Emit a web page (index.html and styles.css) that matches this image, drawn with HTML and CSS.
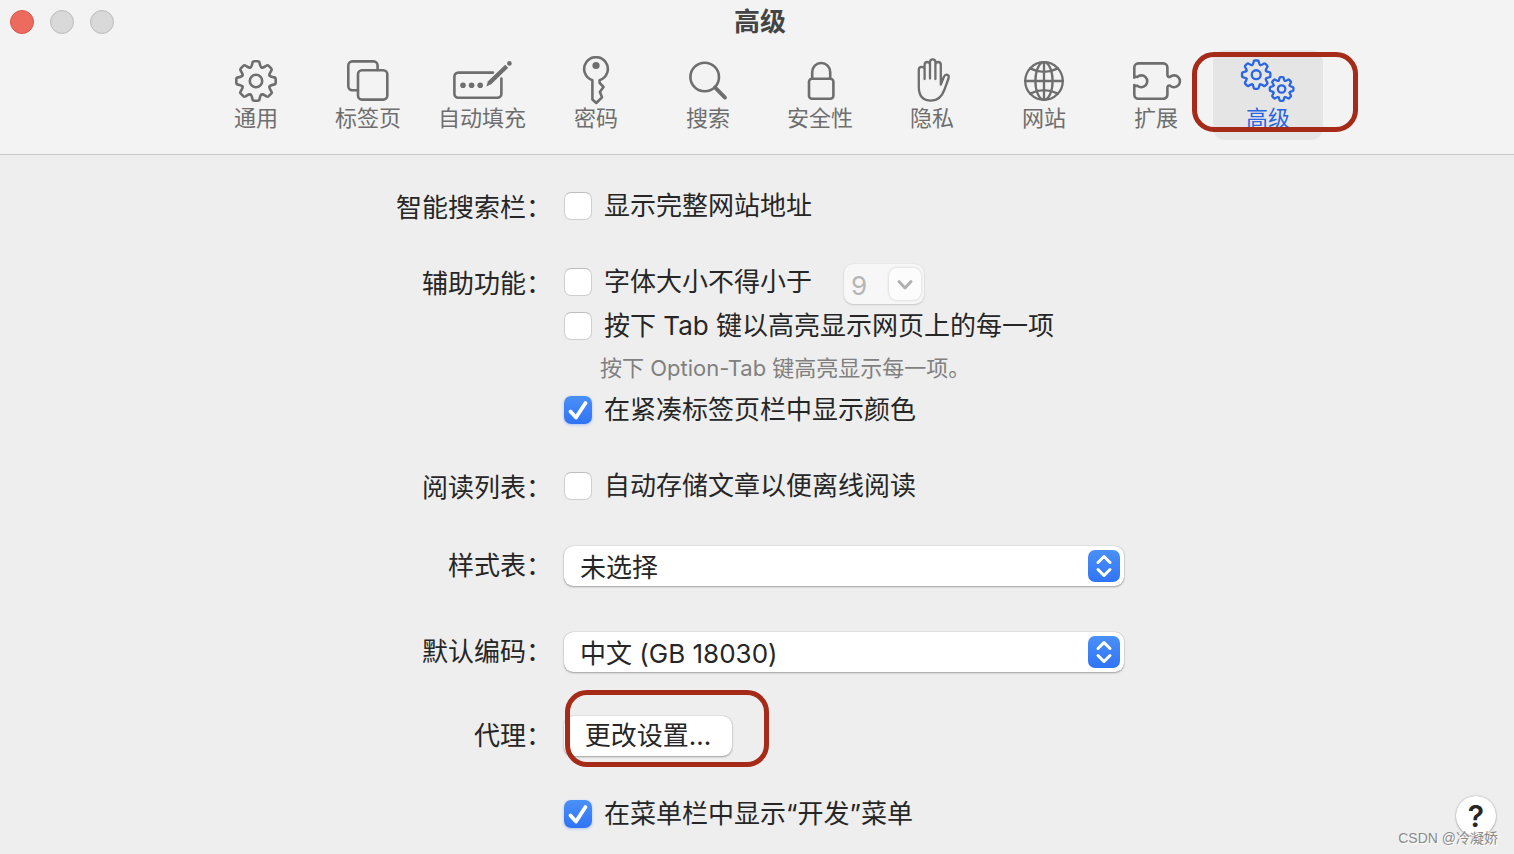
FILE: index.html
```
<!DOCTYPE html>
<html lang="zh-CN">
<head>
  <meta charset="UTF-8">
  <meta name="viewport" content="width=device-width, initial-scale=1.0">
  <title>高级</title>
  <link rel="stylesheet" href="styles.css">
</head>
<body>
  <!-- shared gear shape: one tooth, rotated eight times -->
  <svg class="defs" aria-hidden="true">
    <defs>
      <path id="tooth" vector-effect="non-scaling-stroke" d="M-5.6 -13.5C-4.5 -14 -4.2 -14.9 -3.9 -16.4L-3.6 -18Q-3.3 -19.7 -1.8 -19.7H1.8Q3.3 -19.7 3.6 -18L3.9 -16.4C4.2 -14.9 4.5 -14 5.6 -13.5"/>
      <g id="gear">
        <use href="#tooth"/>
        <use href="#tooth" transform="rotate(45)"/>
        <use href="#tooth" transform="rotate(90)"/>
        <use href="#tooth" transform="rotate(135)"/>
        <use href="#tooth" transform="rotate(180)"/>
        <use href="#tooth" transform="rotate(225)"/>
        <use href="#tooth" transform="rotate(270)"/>
        <use href="#tooth" transform="rotate(315)"/>
        <circle r="6.2" vector-effect="non-scaling-stroke"/>
      </g>
    </defs>
  </svg>

  <header>
    <div class="titlebar">
      <div class="lights">
        <button class="light close" aria-label="关闭"></button>
        <button class="light" aria-label="最小化"></button>
        <button class="light" aria-label="缩放"></button>
      </div>
      <h1>高级</h1>
    </div>

    <nav class="toolbar">
      <button class="tab">
        <svg viewBox="-30 -25 60 50"><use href="#gear"/></svg>
        <span>通用</span>
      </button>
      <button class="tab">
        <svg viewBox="-30 -25 60 50">
          <rect x="-10" y="-10.7" width="29.3" height="29.3" rx="4"/>
          <path d="M9.6 -11V-15.6a4 4 0 0 0 -4 -4H-15.7a4 4 0 0 0 -4 4V5.3a4 4 0 0 0 4 4H-10.5"/>
        </svg>
        <span>标签页</span>
      </button>
      <button class="tab autofill">
        <svg viewBox="-30 -25 60 50">
          <path d="M11 -8.4H-23.6a4 4 0 0 0 -4 4V12.7a4 4 0 0 0 4 4H15.4a4 4 0 0 0 4 -4V-2.5"/>
          <g class="solid">
            <circle cx="-19" cy="4.3" r="2.8"/>
            <circle cx="-10.4" cy="4.3" r="2.8"/>
            <circle cx="-1.8" cy="4.3" r="2.8"/>
            <path d="M4.3 5.4L6 .3L23.2 -16.2L26.2 -13.2L9.2 3.3z"/>
            <circle cx="27.4" cy="-17.6" r="2.3"/>
          </g>
        </svg>
        <span>自动填充</span>
      </button>
      <button class="tab">
        <svg viewBox="-30 -25 60 50">
          <path d="M-3.6 -.8A11.8 11.8 0 1 1 3.6 -.8V1.8L7.5 6L3.9 11L6 16.3L.3 22L-3.6 18.5z"/>
          <circle class="solid" cx="0" cy="-15.5" r="3.6"/>
        </svg>
        <span>密码</span>
      </button>
      <button class="tab">
        <svg viewBox="-30 -25 60 50">
          <circle cx="-3.3" cy="-4" r="14.3"/>
          <path class="thick" d="M7 6.4L17 16.6"/>
        </svg>
        <span>搜索</span>
      </button>
      <button class="tab">
        <svg viewBox="-30 -25 60 50">
          <rect x="-11" y="-2.2" width="24.4" height="19.9" rx="3"/>
          <path d="M-7.8 -2.5V-9a9 9 0 0 1 18 0V-2.5"/>
        </svg>
        <span>安全性</span>
      </button>
      <button class="tab">
        <svg viewBox="-30 -25 60 50">
          <path class="thin" d="M-13.2 6V-11.2a2.9 2.9 0 0 1 5.8 0V-2V-16.3a2.7 2.7 0 0 1 5.4 0V-2.5V-19a2.7 2.7 0 0 1 5.4 0V-2V-16.3a2.7 2.7 0 0 1 5.4 0V3.7L11.8 -4Q13.2 -7 15.4 -6.2Q17.4 -5.2 16.5 -2.5L12.5 8.5Q8.5 19.6 -.8 19.6Q-13.2 19.6 -13.2 6z"/>
        </svg>
        <span>隐私</span>
      </button>
      <button class="tab">
        <svg viewBox="-30 -25 60 50">
          <g class="thin">
            <circle r="18.8"/>
            <ellipse rx="8.6" ry="18.8"/>
            <path d="M0 -18.8V18.8M-18.8 0H18.8M-14 -12.6Q0 -5.6 14 -12.6M-14 12.6Q0 5.6 14 12.6"/>
          </g>
        </svg>
        <span>网站</span>
      </button>
      <button class="tab">
        <svg viewBox="-30 -25 60 50">
          <path d="M-21.7 -3.4V-13.6a4 4 0 0 1 4 -4H7.4a4 4 0 0 1 4 4V-6.5Q11.4 -3.7 14 -4A5.9 5.9 0 1 1 14 4.6Q11.4 4.3 11.4 7V13.7a4 4 0 0 1 -4 4H-17.7a4 4 0 0 1 -4 -4V4Q-20 5.4 -18.7 4.6A5.9 5.9 0 1 0 -18.7 -4Q-20 -4.8 -21.7 -3.4z"/>
        </svg>
        <span>扩展</span>
      </button>
      <button class="tab active" aria-current="page">
        <svg viewBox="-30 -25 60 50">
          <use href="#gear" transform="translate(-11.8 -6.3) scale(.72)"/>
          <use href="#gear" transform="translate(13.6 8) scale(.6)"/>
        </svg>
        <span>高级</span>
        <i class="ring ring-tab"></i>
      </button>
    </nav>
  </header>

  <main class="settings">
    <div class="name">智能搜索栏：</div>
    <div class="group">
      <label class="row"><input type="checkbox">显示完整网站地址</label>
    </div>

    <div class="name">辅助功能：</div>
    <div class="group">
      <div class="row">
        <label class="row"><input type="checkbox">字体大小不得小于</label>
        <div class="size-box">
          <select class="size" aria-label="最小字体大小" disabled><option>9</option></select>
          <svg class="size-arrow" viewBox="0 0 32 32"><path d="M10 13.5L16 20L22 13.5"/></svg>
        </div>
      </div>
      <label class="row"><input type="checkbox">按下 Tab 键以高亮显示网页上的每一项</label>
      <p class="hint">按下 Option-Tab 键高亮显示每一项。</p>
      <label class="row"><input type="checkbox" checked>在紧凑标签页栏中显示颜色</label>
    </div>

    <div class="name">阅读列表：</div>
    <div class="group">
      <label class="row"><input type="checkbox">自动存储文章以便离线阅读</label>
    </div>

    <label class="name pick" for="stylesheet">样式表：</label>
    <div class="group pick">
      <div class="row popup">
        <select id="stylesheet"><option>未选择</option></select>
        <svg class="popup-arrow" viewBox="0 0 32 32"><path d="M10 12.5L16 6.5L22 12.5M10 19.5L16 25.5L22 19.5"/></svg>
      </div>
    </div>

    <label class="name pick" for="encoding">默认编码：</label>
    <div class="group pick">
      <div class="row popup">
        <select id="encoding"><option>中文 (GB 18030)</option></select>
        <svg class="popup-arrow" viewBox="0 0 32 32"><path d="M10 12.5L16 6.5L22 12.5M10 19.5L16 25.5L22 19.5"/></svg>
      </div>
    </div>

    <div class="name proxy">代理：</div>
    <div class="group proxy">
      <div class="row">
        <button class="btn">更改设置…</button>
        <i class="ring ring-btn"></i>
      </div>
    </div>

    <div class="group develop">
      <label class="row"><input type="checkbox" checked>在菜单栏中显示“开发”菜单</label>
    </div>
  </main>

  <button class="help" aria-label="帮助">?</button>
  <div class="watermark">CSDN @冷凝娇</div>
</body>
</html>
```
FILE: styles.css
```
* { box-sizing: border-box; }
body { margin: 0; min-height: 100vh; position: relative; background: #eeeeee; color: #262626;
  font-family: Inter, "Noto Sans CJK SC", sans-serif; font-size: 26px; line-height: 48px; }
button, select, input { font: inherit; color: inherit; margin: 0; }
.defs { display: block; width: 0; height: 0; }

/* window header */
header { background: #f3f3f3; border-bottom: 1px solid #c8c8c8; padding-bottom: 14px; }
.titlebar { display: grid; grid-template-columns: 1fr auto 1fr; align-items: center;
  height: 44px; margin-bottom: 6px; padding: 0 4px 0 10px; }
.lights { display: flex; gap: 16px; }
.light { width: 24px; height: 24px; padding: 0; border: 1px solid #bcbcbc; border-radius: 50%;
  background: #d9d9d9; }
.light.close { background: #ed6a5e; border-color: #d9574b; }
h1 { margin: 0; font-size: 26px; line-height: 40px; font-weight: bold; color: #454545; }

.toolbar { display: flex; justify-content: center; gap: 2px; padding-left: 10px; }
.tab { position: relative; display: flex; flex-direction: column; align-items: center;
  width: 110px; padding: 6px 0 10px; border: none; border-radius: 12px;
  background: none; color: #6e6e6e; font-size: 22px; line-height: 24px; }
.tab.autofill { width: 114px; }
.tab.active { background: #e5e5e5; color: #2a66e4; }
.tab svg { width: 60px; height: 50px; fill: none; stroke: currentColor; stroke-width: 2.6;
  stroke-linejoin: round; stroke-linecap: round; }
.tab.active svg { stroke-width: 2.3; }
.tab .solid { fill: currentColor; stroke: none; }
.tab .thin { stroke-width: 2.3; }
.tab .thick { stroke-width: 3.8; }

/* red marks */
.ring { position: absolute; border: 5px solid #a52b18; border-radius: 22px; pointer-events: none; }
.ring-tab { left: -21px; top: 2px; width: 166px; height: 80px; }
.ring-btn { left: 1px; top: -24px; width: 204px; height: 77px; }

/* settings form */
.settings { display: grid; grid-template-columns: 158px 560px; justify-content: center;
  column-gap: 12px; row-gap: 32px; padding: 29px 0 18px 4px; }
.name { height: 44px; text-align: right; white-space: nowrap; }
.name.pick, .name.proxy { line-height: 44px; }
.row { position: relative; display: flex; align-items: center; height: 44px; white-space: nowrap;
  line-height: 44px; }
.pick { margin: 4px 0 6px; }
.proxy { margin: 2px 0; }
.develop { grid-column: 2; }
.hint { margin: 0 0 0 36px; font-size: 22px; line-height: 40px; color: #808080; }

input[type=checkbox] { appearance: none; width: 28px; height: 28px; margin-right: 12px;
  border: 1px solid #cfcfcf; border-top-color: #bdbdbd; border-radius: 7px; background: white; }
input[type=checkbox]:checked { border: none;
  background: url("data:image/svg+xml,%3Csvg xmlns='http://www.w3.org/2000/svg' viewBox='0 0 28 28'%3E%3Cpath d='M6.5 15.5L12 21.5L21.5 7' fill='none' stroke='white' stroke-width='3.8' stroke-linecap='round' stroke-linejoin='round'/%3E%3C/svg%3E"),
    linear-gradient(#4a90f8, #3074f6);
  box-shadow: 0 1px 3px rgba(48,116,246,0.35); }

.popup select { appearance: none; width: 100%; height: 40px; padding: 0 48px 0 16px;
  border: none; border-radius: 9px; background: white;
  box-shadow: 0 0 1px rgba(0,0,0,0.35), 0 1px 2px rgba(0,0,0,0.3); }
.popup-arrow { position: absolute; right: 4px; top: 6px; width: 32px; height: 32px;
  border-radius: 7px; background: linear-gradient(#4a90f8, #3074f6); pointer-events: none;
  fill: none; stroke: white; stroke-width: 3; stroke-linecap: round; stroke-linejoin: round; }

.size-box { position: relative; display: flex; margin: 4px 0 0 32px; }
.size { appearance: none; width: 80px; height: 40px; padding: 0 0 0 7px; border: none;
  border-radius: 9px; background: #f7f7f7; color: #b5b5b5; opacity: 1;
  box-shadow: 0 0 1px rgba(0,0,0,0.15), 0 1px 2px rgba(0,0,0,0.15); }
.size-arrow { position: absolute; right: 3px; top: 4px; width: 32px; height: 32px;
  border-radius: 8px; background: #fcfcfc; box-shadow: 0 0 3px rgba(0,0,0,0.18); pointer-events: none;
  fill: none; stroke: #b0b0b0; stroke-width: 3; stroke-linecap: round; stroke-linejoin: round; }

.btn { width: 168px; height: 40px; padding: 0; border: none; border-radius: 9px; background: white;
  line-height: 40px;
  box-shadow: 0 0 1px rgba(0,0,0,0.35), 0 1px 2px rgba(0,0,0,0.3); }

.help { position: absolute; right: 18px; bottom: 18px; width: 40px; height: 40px; padding: 0;
  border: none; border-radius: 50%; background: white; font-size: 30px; font-weight: 600;
  line-height: 40px;
  box-shadow: 0 0 2px rgba(0,0,0,0.3), 0 1px 2px rgba(0,0,0,0.2); }
.watermark { position: absolute; right: 16px; bottom: 6px; font-size: 14px; line-height: 20px;
  font-family: "Liberation Sans", "Noto Sans CJK SC", sans-serif; color: #8a8a8a;
  text-shadow: 1px 1px 0 #ffffff; }
```
